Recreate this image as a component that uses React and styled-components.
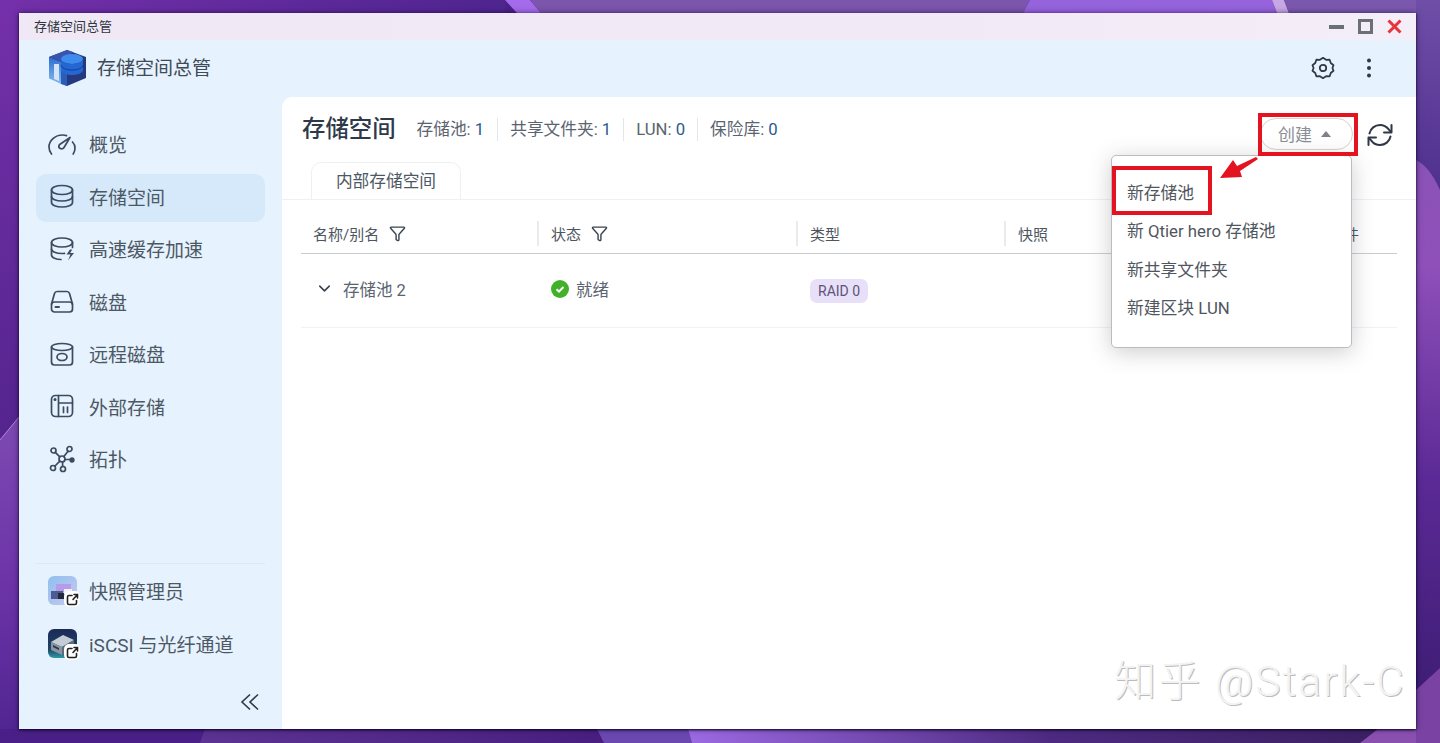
import React from "react";
import styled, { createGlobalStyle } from "styled-components";
import { ChevronDown, Funnel } from "lucide-react";

const FONT = `Roboto, "Noto Sans CJK SC", sans-serif`;

const Global = createGlobalStyle`
  html, body {
    margin: 0;
    height: 100%;
    overflow: hidden;
    background: #4b2389;
  }
  * { box-sizing: border-box; }
`;

const Desktop = styled.div`
  position: relative;
  width: 1440px;
  height: 743px;
  padding: 13px 24px 14px 19px;
  font-family: ${FONT};
  color: #4a5563;
`;

const Wallpaper = styled.svg`
  position: absolute;
  inset: 0;
`;

const Window = styled.div`
  position: relative;
  height: 716px;
  display: flex;
  flex-direction: column;
  background: #e6f2fd;
  box-shadow: 0 1px 2px rgba(10, 0, 30, 0.9), 0 0 6px rgba(20, 5, 50, 0.55);
`;

const TitleBar = styled.div`
  height: 27px;
  flex: none;
  display: flex;
  align-items: center;
  justify-content: space-between;
  padding: 0 14px 0 15px;
  background: linear-gradient(90deg, #f0e8f5 0%, #f1e9f6 60%, #f4eef8 100%);
  font-size: 13px;
  color: #2f3640;
`;

const TitleText = styled.span`
  margin-bottom: 2px;
`;

const WinButtons = styled.div`
  display: flex;
  align-items: center;
  gap: 14px;
`;

const AppHeader = styled.div`
  height: 57px;
  flex: none;
  display: flex;
  align-items: center;
  padding: 0 44px 2px 29px;
  font-size: 19px;
  color: #404a56;
`;

const AppName = styled.span`
  margin-left: 10px;
  margin-bottom: 2px;
`;

const HeaderTools = styled.div`
  margin-left: auto;
  display: flex;
  align-items: center;
  gap: 31px;
`;

const Body = styled.div`
  flex: 1;
  display: flex;
  min-height: 0;
`;

const Sidebar = styled.div`
  width: 263px;
  flex: none;
  display: flex;
  flex-direction: column;
  padding: 24px 17px 0 17px;
`;

const NavList = styled.div`
  display: flex;
  flex-direction: column;
  gap: 4.5px;
`;

const NavItem = styled.div`
  height: 48px;
  display: flex;
  align-items: center;
  gap: 13px;
  padding: 0 0 3px 12px;
  border-radius: 10px;
  font-size: 19px;
  color: #4d5865;
  background: ${(p) => (p.$active ? "#d5e9fb" : "transparent")};
`;

const SideFooter = styled.div`
  margin-top: auto;
  border-top: 1px solid #dce8f2;
  padding-top: 5px;
  display: flex;
  flex-direction: column;
  gap: 5px;
`;

const ShortcutItem = styled(NavItem)`
  gap: 12px;
  padding-bottom: 5px;
`;

const ShortcutIcon = styled.div`
  position: relative;
  width: 29px;
  height: 29px;
  flex: none;
`;

const LinkBadge = styled.div`
  position: absolute;
  right: -3px;
  bottom: -2px;
  width: 16px;
  height: 16px;
  border-radius: 5px;
  background: #fff;
  display: flex;
  align-items: center;
  justify-content: center;
`;

const CollapseRow = styled.div`
  height: 36px;
  display: flex;
  justify-content: flex-end;
  padding-right: 5px;
  margin-top: 23px;
`;

const Main = styled.div`
  flex: 1;
  min-width: 0;
  background: #fff;
  border-radius: 10px 0 0 0;
  display: flex;
  flex-direction: column;
`;

const MainTop = styled.div`
  height: 65px;
  display: flex;
  align-items: center;
  padding: 0 23px 0 20px;
`;

const Heading = styled.h1`
  margin: 0 21px 6px 0;
  font-size: 23.4px;
  font-weight: 500;
  color: #2e3a4a;
`;

const Stat = styled.div`
  font-size: 16.7px;
  color: #5a6470;
  padding: 0 12px;
  line-height: 23px;
  border-left: ${(p) => (p.$first ? "0" : "1px solid #e3e6ea")};
  ${(p) => p.$first && "padding: 0 13px 0 0;"}
`;

const StatValue = styled.span`
  color: #2b5a8c;
`;

const CreateButton = styled.div`
  margin-left: auto;
  width: 93px;
  height: 32px;
  margin-top: 8px;
  margin-right: 14px;
  padding-right: 4px;
  border: 1px solid #d9d3c8;
  border-radius: 16px;
  display: flex;
  align-items: center;
  justify-content: center;
  gap: 9px;
  font-size: 17px;
  color: #8b8f95;
`;

const Caret = styled.span`
  width: 0;
  height: 0;
  border-left: 5px solid transparent;
  border-right: 5px solid transparent;
  border-bottom: 6px solid #7d8188;
`;

const RefreshSlot = styled.div`
  display: flex;
  margin-top: 10px;
`;

const TabStrip = styled.div`
  height: 38px;
  padding-left: 29px;
  border-bottom: 1px solid #eef0f2;
`;

const Tab = styled.div`
  width: 150px;
  height: 38px;
  padding: 0 0 3px 0;
  display: flex;
  align-items: center;
  justify-content: center;
  border: 1px solid #eef0f2;
  border-bottom: 0;
  border-radius: 10px 10px 0 0;
  font-size: 16.7px;
  color: #4d5865;
`;

const Table = styled.div`
  margin: 0 19px;
`;

const Row = styled.div`
  display: grid;
  grid-template-columns: 236px 259px 208px 1fr 120px;
  align-items: center;
  border-bottom: 1px solid ${(p) => (p.$head ? "#c9cccf" : "#f1f2f4")};
  height: ${(p) => (p.$head ? "54px" : "74px")};
  padding-top: ${(p) => (p.$head ? "13px" : "0")};
`;

const HeadCell = styled.div`
  height: 25px;
  display: flex;
  align-items: center;
  gap: 10px;
  padding-left: 12px;
  font-size: 15px;
  color: #4d5560;
  border-left: ${(p) => (p.$first ? "0" : "2px solid #e8eaec")};
`;

const TailHead = styled(HeadCell)`
  border-left: 0;
  justify-content: flex-end;
  padding-right: 38px;
`;

const Cell = styled.div`
  display: flex;
  align-items: center;
  font-size: 16.5px;
  color: #5a6470;
  padding-left: ${(p) => p.$pad || 14}px;
  padding-bottom: 4px;
  gap: ${(p) => p.$gap || 7}px;
`;

const PillCell = styled(Cell)`
  padding-bottom: 0;
`;

const Pill = styled.span`
  height: 24px;
  padding: 0 8px;
  display: inline-flex;
  align-items: center;
  border-radius: 7px;
  background: #e8e0f8;
  color: #5d5478;
  font-size: 14px;
`;

const Menu = styled.div`
  position: absolute;
  left: 1092px;
  top: 142px;
  width: 241px;
  height: 193px;
  background: #fff;
  border: 1px solid #b9bcc0;
  border-radius: 5px;
  box-shadow: 0 4px 22px rgba(60, 60, 70, 0.26);
  padding-top: 17px;
  z-index: 2;
`;

const MenuItem = styled.div`
  height: 38.3px;
  display: flex;
  align-items: center;
  padding-left: 15px;
  font-size: 16.8px;
  color: #50565e;
`;

const RedBox = styled.div`
  position: absolute;
  left: ${(p) => p.$x}px;
  top: ${(p) => p.$y}px;
  width: ${(p) => p.$w}px;
  height: ${(p) => p.$h}px;
  border: 4px solid #e3141f;
  z-index: 3;
`;

const Arrow = styled.svg`
  position: absolute;
  left: 1199px;
  top: 142px;
  z-index: 3;
`;

const Watermark = styled.div`
  position: absolute;
  right: 10px;
  bottom: 22px;
  font-size: 42px;
  font-weight: 300;
  line-height: 50px;
  letter-spacing: 2.2px;
  color: #f3f3f3;
  text-shadow: 1px 1px 0 #bcbcbc;
  white-space: nowrap;
  z-index: 1;
`;

const INK = "#3b4b60";

function Ico({ children, size = 28 }) {
  return (
    <svg width={size} height={size} viewBox="0 0 28 28" fill="none" stroke={INK} strokeWidth="1.7" strokeLinecap="round" strokeLinejoin="round" style={{ flex: "none" }}>
      {children}
    </svg>
  );
}

const navItems = [
  {
    label: "概览",
    icon: (
      <Ico>
        <path d="M3.500 24C1.800 22 1 19.500 1 17 1 10.500 7 5 14.500 5c1.500 0 3 .2 4 .6" />
        <path d="M24.500 12c1.500 1.500 2.500 3.500 2.500 6 0 2.500-.8 4.500-1.800 6" />
        <path d="M22 7.500l-6 10a2.700 2.700 0 0 1-4.700-2.700z" />
      </Ico>
    ),
  },
  {
    label: "存储空间",
    active: true,
    icon: (
      <Ico>
        <ellipse cx="14" cy="8" rx="10.500" ry="4.500" />
        <path d="M3.500 8v12.500c0 2.600 4.700 4.500 10.500 4.500s10.500-1.900 10.500-4.500V8" />
        <path d="M3.500 14.500c0 2.600 4.700 4.500 10.500 4.500s10.500-1.900 10.500-4.500" />
      </Ico>
    ),
  },
  {
    label: "高速缓存加速",
    icon: (
      <Ico>
        <ellipse cx="14" cy="7.500" rx="10.500" ry="4.500" />
        <path d="M3.500 7.500v12.500c0 2.600 4.700 4.500 9.500 4.500" />
        <path d="M3.500 14c0 2.600 4.700 4.500 10.500 4.500 1 0 1.500 0 2.500-.2" />
        <path d="M24.500 7.500v5" />
        <path d="M22 14.500l-3.500 5h4l-2.500 6 6-7.500h-3.800l2-3.500z" fill={INK} stroke="none" />
      </Ico>
    ),
  },
  {
    label: "磁盘",
    icon: (
      <Ico>
        <path d="M3.500 17L6.500 6.500c.4-1.300 1.400-2 2.700-2h9.600c1.300 0 2.300.7 2.700 2L24.500 17" />
        <rect x="3.500" y="15" width="21" height="10" rx="3" />
        <path d="M7.500 20h3.500" strokeWidth="2" />
      </Ico>
    ),
  },
  {
    label: "远程磁盘",
    icon: (
      <Ico>
        <ellipse cx="14" cy="7" rx="10.500" ry="3.500" />
        <path d="M3.500 7v15c0 1.700 1.300 3 3 3h15c1.700 0 3-1.300 3-3V7" />
        <ellipse cx="14" cy="17" rx="5" ry="3.500" />
      </Ico>
    ),
  },
  {
    label: "外部存储",
    icon: (
      <Ico>
        <rect x="3.500" y="3.500" width="21" height="21" rx="4" />
        <path d="M10.500 3.500v21M10.500 11h14" />
        <path d="M15.500 15v5.500M19.500 15v5.500" />
        <circle cx="7" cy="7.500" r=".7" fill={INK} />
      </Ico>
    ),
  },
  {
    label: "拓扑",
    icon: (
      <Ico>
        <circle cx="14" cy="14" r="3" />
        <circle cx="5.500" cy="5.500" r="2.500" />
        <circle cx="21.500" cy="4" r="2.500" />
        <circle cx="5" cy="23" r="2.500" />
        <circle cx="15" cy="24" r="2.500" />
        <circle cx="24" cy="15" r="1.800" fill={INK} />
        <path d="M7.300 7.300l4.500 4.500M20 6.200l-4.300 5.500M7 21l4.800-4.800M14.600 17v4.500M17 14.500h5.500" />
      </Ico>
    ),
  },
];

function ExternalMark() {
  return (
    <svg width="13" height="13" viewBox="0 0 13 13" fill="none" stroke="#222" strokeWidth="1.600" strokeLinecap="round">
      <path d="M6 2.500H3A1.500 1.500 0 0 0 1.500 4v6A1.500 1.500 0 0 0 3 11.500h6A1.500 1.500 0 0 0 10.500 10V7.500" />
      <path d="M7 6.500L11.500 1.500M8 1.500h3.500V5" />
    </svg>
  );
}

function SnapshotArt() {
  return (
    <svg width="29" height="29" viewBox="0 0 29 29">
      <defs>
        <linearGradient id="snapBg" x1="0" y1="0" x2="1" y2="1">
          <stop offset="0" stopColor="#8fc0ee" />
          <stop offset="1" stopColor="#c8c8f0" />
        </linearGradient>
      </defs>
      <rect width="29" height="29" rx="6" fill="url(#snapBg)" />
      <path d="M8 8h15v8H8z" fill="#b59be8" />
      <path d="M3 15h12v8H3z" fill="#4c5c92" />
      <path d="M10 17h8v6h-8z" fill="#23283a" />
      <path d="M16 13h8v5h-8z" fill="#eef0fb" />
    </svg>
  );
}

function IscsiArt() {
  return (
    <svg width="29" height="29" viewBox="0 0 29 29">
      <defs>
        <linearGradient id="iscsiBg" x1="0" y1="0" x2="0" y2="1">
          <stop offset="0" stopColor="#1b2b56" />
          <stop offset=".7" stopColor="#1f4466" />
          <stop offset="1" stopColor="#2d9aa8" />
        </linearGradient>
      </defs>
      <rect width="29" height="29" rx="6" fill="url(#iscsiBg)" />
      <path d="M3 13l12-7 11 5-12 7z" fill="#c5ccd6" />
      <path d="M3 13l11 5v8L3 21z" fill="#8b95a2" />
      <path d="M14 18l12-7v6l-12 9z" fill="#5d6b7c" />
      <path d="M5 16l6 3v2l-6-3z" fill="#2d3644" />
    </svg>
  );
}

function AppLogo() {
  return (
    <svg width="39" height="38" viewBox="0 0 39 38" style={{ flex: "none" }}>
      <defs>
        <linearGradient id="cubeL" x1="0" y1="0" x2="0" y2="1">
          <stop offset="0" stopColor="#2b6fd2" />
          <stop offset="1" stopColor="#86b8ef" />
        </linearGradient>
      </defs>
      <path d="M19 1L38 8v21L19 37 1 29V8z" fill="#27397e" />
      <path d="M1 8l12 5v22L1 29z" fill="url(#cubeL)" />
      <path d="M13 13l6 2v22l-6-2z" fill="#2b5db8" />
      <path d="M6 15h5v17l-5-2z" fill="#d4e4f7" />
      <path d="M1 8l18-7 6 2-11 10z" fill="#3a55b0" />
      <ellipse cx="24" cy="10" rx="11" ry="5" fill="#3d8bec" />
      <path d="M13 10v11c0 2.800 5 5 11 5s11-2.200 11-5V10c0 2.800-5 5-11 5s-11-2.200-11-5z" fill="#2467d2" />
      <path d="M13 16c0 2.800 5 5 11 5s11-2.200 11-5" stroke="#153f95" strokeWidth="1" fill="none" />
    </svg>
  );
}

export default function App() {
  return (
    <Desktop>
      <Global />
      <Wallpaper width="1440" height="743" viewBox="0 0 1440 743">
        <defs>
          <linearGradient id="leftDark" x1="0" y1="0" x2="0" y2="1">
            <stop offset="0" stopColor="#7430aa" />
            <stop offset="1" stopColor="#3f1d7a" />
          </linearGradient>
          <linearGradient id="leftLight" x1="0" y1="0" x2="0" y2="1">
            <stop offset="0" stopColor="#7d4ab2" />
            <stop offset=".5" stopColor="#6d34a8" />
            <stop offset="1" stopColor="#4f2490" />
          </linearGradient>
          <linearGradient id="topLeft" x1="0" y1="0" x2="1" y2="0">
            <stop offset="0" stopColor="#7430aa" />
            <stop offset="1" stopColor="#4f2590" />
          </linearGradient>
          <linearGradient id="rightTop" x1="0" y1="0" x2="0" y2="1">
            <stop offset="0" stopColor="#6f4ea8" />
            <stop offset="1" stopColor="#50308e" />
          </linearGradient>
          <linearGradient id="rightMid" x1="0" y1="0" x2="0" y2="1">
            <stop offset="0" stopColor="#8a52b6" />
            <stop offset=".2" stopColor="#8f50ba" />
            <stop offset=".6" stopColor="#5c2a96" />
            <stop offset="1" stopColor="#3f1e76" />
          </linearGradient>
          <linearGradient id="bottomGlow" x1="0" y1="0" x2="1" y2="0">
            <stop offset="0" stopColor="#9c6ae2" />
            <stop offset=".5" stopColor="#4d2a80" />
            <stop offset="1" stopColor="#3a1f60" />
          </linearGradient>
          <linearGradient id="bottomMid" x1="0" y1="0" x2="1" y2="0">
            <stop offset="0" stopColor="#5c3292" />
            <stop offset="1" stopColor="#481f80" />
          </linearGradient>
        </defs>
        <rect width="1440" height="743" fill="#4b2389" />
        <rect width="19" height="743" fill="url(#leftDark)" />
        <path d="M0 440L19 417V743H0z" fill="url(#leftLight)" />
        <path d="M0 440L19 417" stroke="#b08ad8" strokeWidth="1" />
        <rect width="505" height="13" fill="url(#topLeft)" />
        <path d="M505 0H530L541 13H517z" fill="#a46cec" />
        <path d="M530 0H1030L1023 13H541z" fill="#7b56ac" />
        <path d="M1030 0H1272L1277 13H1023z" fill="#9563dc" />
        <path d="M1272 0H1284L1289 13H1277z" fill="#c8a8e4" />
        <path d="M1284 0H1440V13H1289z" fill="#7a58ae" />
        <path d="M1416 0H1440V190C1432 172 1424 164 1416 160z" fill="url(#rightTop)" />
        <path d="M1416 160C1424 164 1432 172 1440 190V668L1416 690z" fill="url(#rightMid)" />
        <path d="M1416 690L1440 668V743H1416z" fill="#7a42a2" />
        <rect y="729" width="205" height="14" fill="#4a2088" />
        <path d="M205 729H600L604 743H200z" fill="url(#bottomMid)" />
        <path d="M597 729H688L692 743H604z" fill="#6a48b0" />
        <path d="M688 729H1416V743H692z" fill="url(#bottomGlow)" />
        <path d="M1378 729H1416V743H1360z" fill="#8a50b0" />
      </Wallpaper>
      <Window>
        <TitleBar>
          <TitleText>存储空间总管</TitleText>
          <WinButtons>
            <svg width="15" height="15" viewBox="0 0 15 15"><rect x="0" y="6" width="15" height="4" fill="#6b7078" /></svg>
            <svg width="15" height="15" viewBox="0 0 15 15" fill="none"><rect x="1.500" y="1.500" width="12" height="12" stroke="#6b7078" strokeWidth="3" /></svg>
            <svg width="15" height="15" viewBox="0 0 15 15" stroke="#e8353a" strokeWidth="3"><path d="M1.500 1.500l12 12M13.500 1.500l-12 12" /></svg>
          </WinButtons>
        </TitleBar>
        <AppHeader>
          <AppLogo />
          <AppName>存储空间总管</AppName>
          <HeaderTools>
            <svg width="24" height="24" viewBox="0 0 26 26" fill="none" stroke="#2f3844" strokeWidth="1.900" strokeLinejoin="round">
              <path d="M13 2l3.300 2.100 3.900-.1 1.200 3.600 3 2.400-1.200 3 1.200 3-3 2.400-1.200 3.600-3.900-.1L13 24l-3.300-2.100-3.900.1-1.200-3.600-3-2.400 1.200-3-1.200-3 3-2.400L5.800 4l3.900.1z" />
              <circle cx="13" cy="13" r="3.500" />
            </svg>
            <svg width="6" height="20" viewBox="0 0 6 20" fill="#2f3844">
              <circle cx="3" cy="2.500" r="2" />
              <circle cx="3" cy="10" r="2" />
              <circle cx="3" cy="17.500" r="2" />
            </svg>
          </HeaderTools>
        </AppHeader>
        <Body>
          <Sidebar>
            <NavList>
              {navItems.map((n) => (
                <NavItem key={n.label} $active={n.active}>
                  {n.icon}
                  <span>{n.label}</span>
                </NavItem>
              ))}
            </NavList>
            <SideFooter>
              <ShortcutItem>
                <ShortcutIcon>
                  <SnapshotArt />
                  <LinkBadge><ExternalMark /></LinkBadge>
                </ShortcutIcon>
                <span>快照管理员</span>
              </ShortcutItem>
              <ShortcutItem>
                <ShortcutIcon>
                  <IscsiArt />
                  <LinkBadge><ExternalMark /></LinkBadge>
                </ShortcutIcon>
                <span>iSCSI 与光纤通道</span>
              </ShortcutItem>
            </SideFooter>
            <CollapseRow>
              <svg width="20" height="18" viewBox="0 0 20 18" fill="none" stroke="#2f3844" strokeWidth="1.600">
                <path d="M10 1.500L2 9l8 7.500M18 1.500L10 9l8 7.500" />
              </svg>
            </CollapseRow>
          </Sidebar>
          <Main>
            <MainTop>
              <Heading>存储空间</Heading>
              <Stat $first>存储池: <StatValue>1</StatValue></Stat>
              <Stat>共享文件夹: <StatValue>1</StatValue></Stat>
              <Stat>LUN: <StatValue>0</StatValue></Stat>
              <Stat>保险库: <StatValue>0</StatValue></Stat>
              <CreateButton>创建<Caret /></CreateButton>
              <RefreshSlot>
                <svg width="26" height="26" viewBox="0 0 26 26" fill="none" stroke="#2f3844" strokeWidth="2" strokeLinecap="round" strokeLinejoin="round">
                  <path d="M2.500 11.500C3.500 6.500 7.800 3 13 3c3.500 0 6.500 1.600 8.500 4.200L24 10" />
                  <path d="M24.500 3v7.500H17" />
                  <path d="M23.500 14.500C22.500 19.500 18.200 23 13 23c-3.500 0-6.500-1.600-8.500-4.200L2 16" />
                  <path d="M1.500 23v-7.500H9" />
                </svg>
              </RefreshSlot>
            </MainTop>
            <TabStrip>
              <Tab>内部存储空间</Tab>
            </TabStrip>
            <Table>
              <Row $head>
                <HeadCell $first>名称/别名<Funnel size={17} color="#3a4350" strokeWidth={2} /></HeadCell>
                <HeadCell>状态<Funnel size={17} color="#3a4350" strokeWidth={2} /></HeadCell>
                <HeadCell>类型</HeadCell>
                <HeadCell>快照</HeadCell>
                <TailHead>文件</TailHead>
              </Row>
              <Row>
                <Cell $gap={9}><ChevronDown size={19} color="#3a4350" strokeWidth={2} />存储池 2</Cell>
                <Cell>
                  <svg width="18" height="18" viewBox="0 0 18 18">
                    <circle cx="9" cy="9" r="9" fill="#43b02a" />
                    <path d="M5.500 9.200l2.500 2.300 4.500-4.500" fill="none" stroke="#fff" strokeWidth="2" />
                  </svg>
                  就绪
                </Cell>
                <PillCell><Pill>RAID 0</Pill></PillCell>
                <Cell />
              </Row>
            </Table>
          </Main>
        </Body>
        <Menu>
          <MenuItem>新存储池</MenuItem>
          <MenuItem>新 Qtier hero 存储池</MenuItem>
          <MenuItem>新共享文件夹</MenuItem>
          <MenuItem>新建区块 LUN</MenuItem>
        </Menu>
        <RedBox $x={1239} $y={100} $w={100} $h={43} />
        <RedBox $x={1093} $y={153} $w={100} $h={49} />
        <Arrow width="60" height="40" viewBox="0 0 60 40">
          <path d="M2 23L15 5 19 11 38 2 40 4 22 16 24 22z" fill="#e3141f" />
        </Arrow>
        <Watermark>知乎 @Stark-C</Watermark>
      </Window>
    </Desktop>
  );
}
